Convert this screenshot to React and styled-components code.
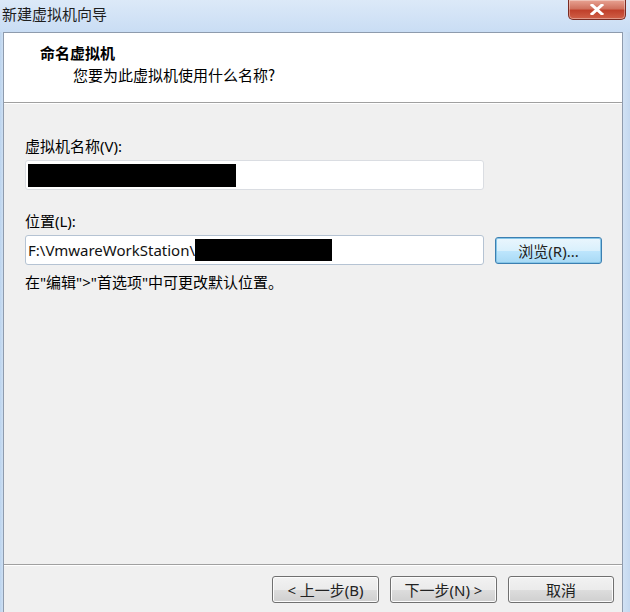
import styled, { createGlobalStyle } from 'styled-components';

const GlobalStyle = createGlobalStyle`
  html, body {
    margin: 0;
    padding: 0;
    background: #ffffff;
  }
  body {
    font-family: "Noto Sans", "Noto Sans CJK SC", sans-serif;
    font-size: 15px;
    color: #000;
  }
`

const Window = styled.div`
  width: 630px;
  height: 612px;
  display: flex;
  flex-direction: column;
  background: linear-gradient(to right, #bcd4ee 0, #d3e3f5 4px, #d3e3f5 622px, #c4d8ef 630px);
  overflow: hidden;
`

const TitleBar = styled.div`
  height: 32px;
  flex: none;
  display: flex;
  align-items: flex-start;
  justify-content: space-between;
  padding: 0 4px 0 2px;
  background: linear-gradient(to bottom, #dce9f8, #c9ddf4);
`

const Title = styled.div`
  font-family: "Noto Sans CJK SC", sans-serif;
  font-size: 15px;
  line-height: 28px;
  color: #1e1e1e;
`

const CloseButton = styled.div`
  width: 56px;
  height: 19px;
  border: 1px solid #7a2b22;
  border-top: none;
  border-radius: 0 0 5px 5px;
  background: linear-gradient(to bottom, #e8a393 0, #d0725f 45%, #c0402b 55%, #d06048 100%);
  display: flex;
  align-items: center;
  justify-content: center;
  box-shadow: inset 0 0 0 1px rgba(255, 255, 255, 0.35);
`

const Client = styled.div`
  flex: 1;
  display: flex;
  flex-direction: column;
  margin: 0 7px 0 3px;
  border: 1px solid #8e9bad;
  border-bottom: none;
  background: #f0f0f0;
`

const Header = styled.div`
  height: 70px;
  flex: none;
  background: #ffffff;
  border-bottom: 1px solid #a0a0a0;
  box-shadow: 0 1px 0 #ffffff;
  padding: 9px 0 0 36px;
  box-sizing: border-box;
`

const HeaderTitle = styled.div`
  font-family: "Noto Sans CJK SC", sans-serif;
  font-weight: 700;
  font-size: 15px;
  line-height: 22px;
`

const HeaderSub = styled.div`
  font-family: "Noto Sans CJK SC", sans-serif;
  font-size: 15px;
  line-height: 22px;
  padding-left: 33px;
`

const Body = styled.div`
  flex: 1;
  padding: 33px 0 0 21px;
  display: flex;
  flex-direction: column;
`

const Label = styled.div`
  font-size: 15px;
  line-height: 20px;
  margin-top: ${p => p.$top || 0}px;
  margin-bottom: 4px;
`

const FieldRow = styled.div`
  display: flex;
  align-items: center;
  gap: 11px;
`

const Field = styled.div`
  width: 459px;
  height: 30px;
  box-sizing: border-box;
  background: #ffffff;
  border: 1px solid ${p => p.$dark ? '#b5c3d3' : '#dadde2'};
  border-radius: 3px;
  display: flex;
  align-items: center;
  padding-left: 2px;
  font-size: 15px;
  color: #111;
  white-space: nowrap;
`

const Redact = styled.span`
  display: inline-block;
  background: #000;
  height: ${p => p.$h}px;
  width: ${p => p.$w}px;
`

const Hint = styled.div`
  font-size: 15px;
  line-height: 20px;
  margin-top: 7px;
`

const Button = styled.div`
  width: ${p => p.$w || 107}px;
  height: 27px;
  box-sizing: border-box;
  border: 1px solid ${p => p.$focus ? '#3c7fb1' : '#707070'};
  border-radius: 3px;
  background: ${p => p.$focus
    ? 'linear-gradient(to bottom, #eaf6fd 0, #d9f0fc 50%, #bee6fd 51%, #a7d9f5 100%)'
    : 'linear-gradient(to bottom, #f2f2f2 0, #ebebeb 50%, #dddddd 51%, #cfcfcf 100%)'};
  box-shadow: inset 0 0 0 1px ${p => p.$focus ? '#86c6e8' : '#fcfcfc'};
  display: flex;
  align-items: center;
  justify-content: center;
  font-size: 15px;
  color: #222;
`

const Footer = styled.div`
  height: 48px;
  flex: none;
  border-top: 1px solid #a0a0a0;
  box-shadow: inset 0 1px 0 #ffffff;
  display: flex;
  align-items: flex-start;
  justify-content: flex-end;
  padding: 11px 8px 0 0;
  box-sizing: border-box;
  gap: 11px;
`

const CloseX = () => (
  <svg width="14" height="11" viewBox="0 0 14 11">
    <path d="M2 1 L12 10 M12 1 L2 10" stroke="#ffffff" strokeWidth="3" strokeLinecap="square" />
  </svg>
)

export default function App() {
  return (
    <>
      <GlobalStyle />
      <Window>
        <TitleBar>
          <Title>新建虚拟机向导</Title>
          <CloseButton><CloseX /></CloseButton>
        </TitleBar>
        <Client>
          <Header>
            <HeaderTitle>命名虚拟机</HeaderTitle>
            <HeaderSub>您要为此虚拟机使用什么名称?</HeaderSub>
          </Header>
          <Body>
            <Label>虚拟机名称(V):</Label>
            <Field>
              <Redact $w={208} $h={23} />
            </Field>
            <Label $top={21}>位置(L):</Label>
            <FieldRow>
              <Field $dark>
                F:\VmwareWorkStation\<Redact $w={137} $h={22} />
              </Field>
              <Button $focus>浏览(R)...</Button>
            </FieldRow>
            <Hint>在"编辑">"首选项"中可更改默认位置。</Hint>
          </Body>
          <Footer>
            <Button>&lt; 上一步(B)</Button>
            <Button>下一步(N) &gt;</Button>
            <Button $w={106}>取消</Button>
          </Footer>
        </Client>
      </Window>
    </>
  );
}
